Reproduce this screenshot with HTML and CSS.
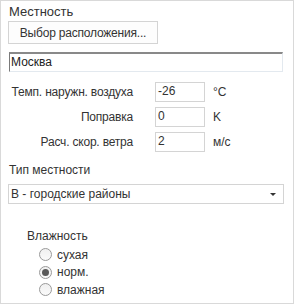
FILE: index.html
```html
<!DOCTYPE html>
<html lang="ru">
<head>
<meta charset="utf-8">
<link rel="stylesheet" href="styles.css">
</head>
<body>
<div class="panel">
  <div class="title">Местность</div>
  <button class="btn">Выбор расположения...</button>
  <div class="city">Москва</div>
  <div class="params">
    <div class="lbl">Темп. наружн. воздуха</div><div class="field">-26</div><div class="unit">°C</div>
    <div class="lbl">Поправка</div><div class="field">0</div><div class="unit">K</div>
    <div class="lbl">Расч. скор. ветра</div><div class="field">2</div><div class="unit">м/с</div>
  </div>
  <div class="title type-title">Тип местности</div>
  <div class="select"><span>В - городские районы</span><span class="arrow"></span></div>
  <div class="humidity">
    <div class="hum-title">Влажность</div>
    <div class="radio"><span class="dot"></span>сухая</div>
    <div class="radio"><span class="dot on"></span>норм.</div>
    <div class="radio"><span class="dot"></span>влажная</div>
  </div>
</div>
</body>
</html>
```

FILE: styles.css
```css
* { box-sizing: border-box; }
html, body { margin: 0; padding: 0; background: #fff; }
body {
  font-family: "Liberation Sans", Arial, sans-serif;
  font-size: 12px;
  color: #333;
}
.panel {
  width: 294px;
  height: 304px;
  border: 1px solid #d9d9d9;
  padding: 3px 0 0 7px;
  display: flex;
  flex-direction: column;
  align-items: flex-start;
}
.title {
  font-size: 13px;
  line-height: 16px;
  padding-left: 1px;
}
.btn {
  margin-top: 1px;
  width: 150px;
  height: 23px;
  border: 1px solid #d4d4d4;
  background: #fdfdfd;
  font: inherit;
  letter-spacing: -0.2px;
  color: #333;
  padding: 0;
}
.city {
  margin-top: 8px;
  margin-left: 1px;
  width: 274px;
  height: 20px;
  border-top: 2px solid #898989;
  border-left: 1px solid #7a7a7a;
  border-right: 1px solid #e3e9ef;
  border-bottom: 1px solid #e3e9ef;
  padding-left: 1px;
  line-height: 17px;
  color: #222;
}
.params {
  margin-top: 10px;
  display: grid;
  grid-template-columns: 125px 50px auto;
  column-gap: 22px;
  row-gap: 5px;
  align-items: center;
}
.params .unit { margin-left: -14px; }
.lbl { justify-self: end; white-space: nowrap; letter-spacing: -0.2px; }
.field {
  height: 20px;
  border: 1px solid #d4d4d4;
  padding-left: 2px;
  line-height: 17px;
}
.type-title { margin-top: 10px; font-size: 12px; }
.select {
  margin-top: 6px;
  width: 276px;
  height: 20px;
  border: 1px solid #d4d4d4;
  display: flex;
  align-items: center;
  justify-content: space-between;
  padding: 0 7px 0 2px;
}
.arrow {
  width: 0; height: 0;
  border-left: 3px solid transparent;
  border-right: 3px solid transparent;
  border-top: 3px solid #333;
}
.humidity {
  margin-top: 24px;
  margin-left: 19px;
}
.hum-title { line-height: 16px; margin-bottom: 2px; }
.radio {
  display: flex;
  align-items: center;
  height: 17.5px;
  margin-left: 12px;
}
.dot {
  width: 13px; height: 13px;
  border: 1px solid #9a9a9a;
  border-radius: 50%;
  background: linear-gradient(#f0f0f0, #fafafa);
  margin-right: 5px;
  display: flex;
  align-items: center;
  justify-content: center;
}
.dot.on::after {
  content: "";
  width: 7px; height: 7px;
  border-radius: 50%;
  background: #5a5a5a;
}
```
